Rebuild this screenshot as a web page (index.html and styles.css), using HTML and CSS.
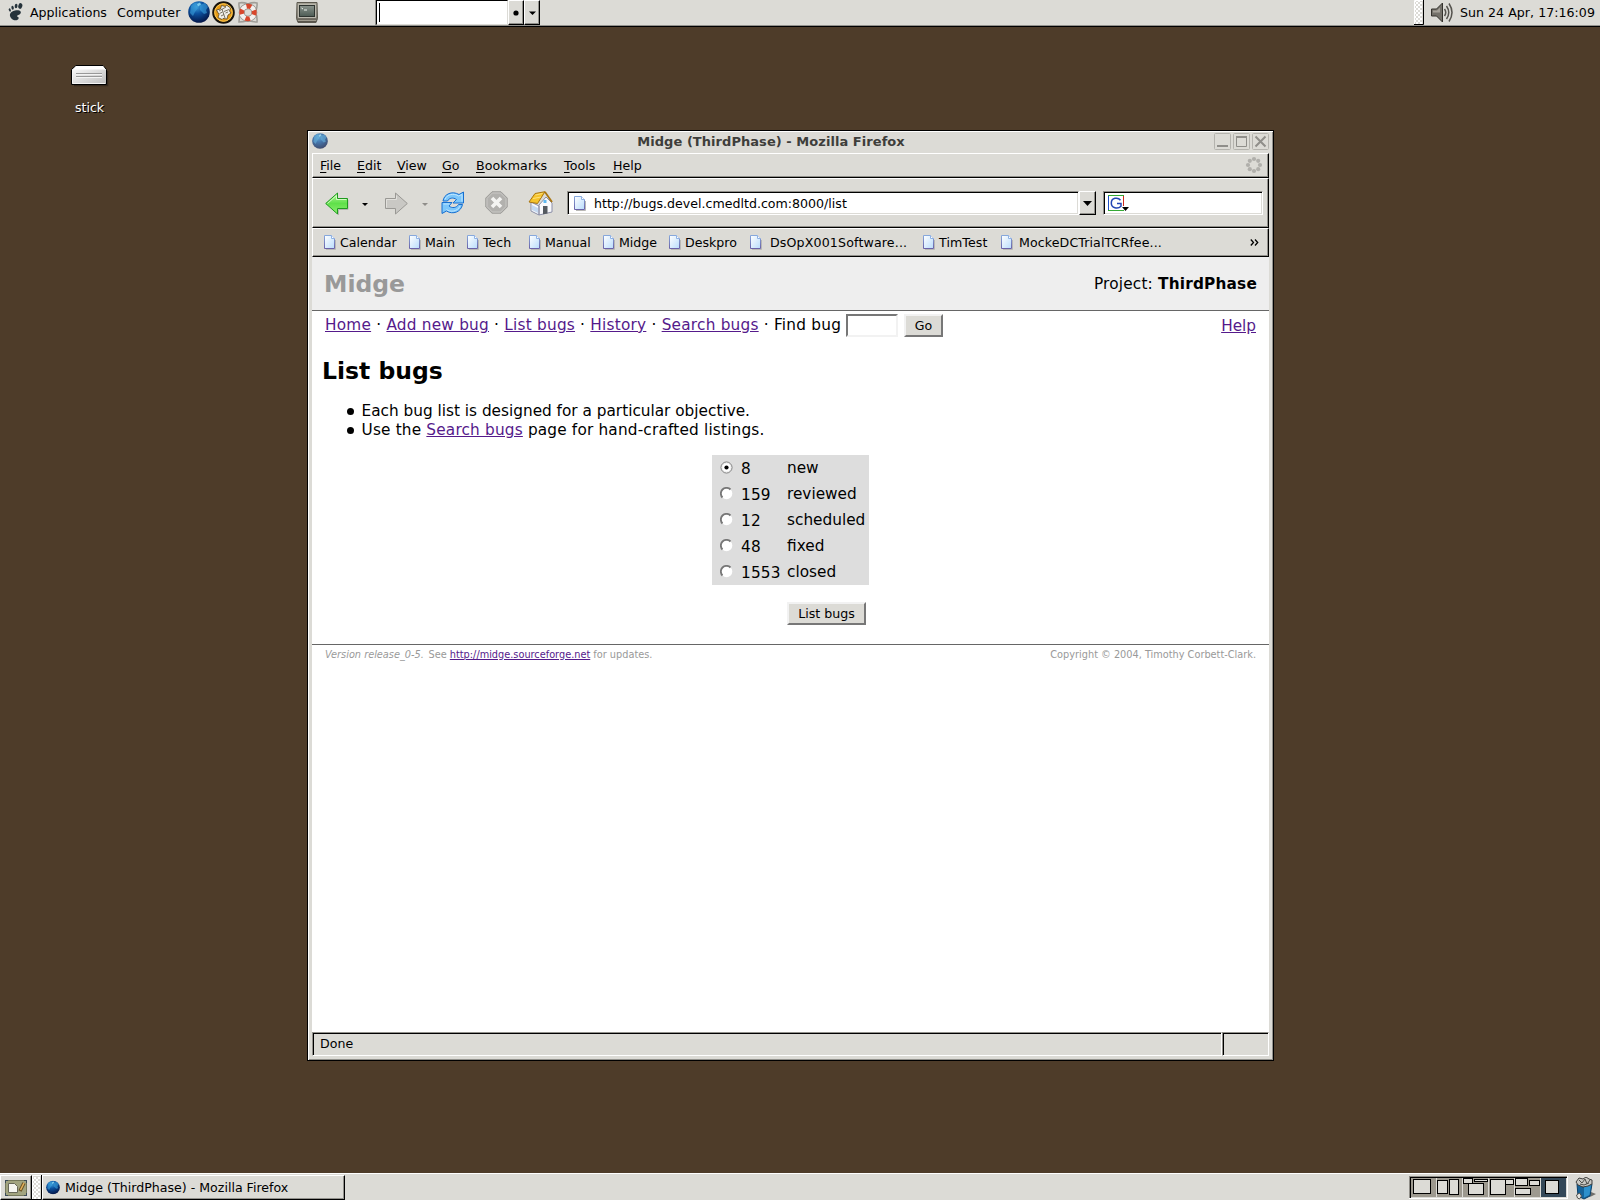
FILE: index.html
```html
<!DOCTYPE html>
<html lang="en">
<head>
<meta charset="utf-8">
<title>Midge (ThirdPhase) - Mozilla Firefox</title>
<link rel="stylesheet" href="styles.css">
</head>
<body>
<svg class="defs" width="0" height="0" aria-hidden="true">
  <defs>
    <radialGradient id="globeFill" cx=".4" cy=".25" r=".8"><stop offset="0" stop-color="#3fa0dc"/><stop offset=".4" stop-color="#0c52a0"/><stop offset="1" stop-color="#03103f"/></radialGradient>
    <linearGradient id="pageFill" x1="0" y1="0" x2="1" y2="1"><stop offset="0" stop-color="#fff"/><stop offset="1" stop-color="#b9dcfc"/></linearGradient>
    <linearGradient id="pageEdge" x1="0" y1="0" x2="0" y2="1"><stop offset="0" stop-color="#86a8dc"/><stop offset="1" stop-color="#6a62a8"/></linearGradient>
    <linearGradient id="greenFill" x1="0" y1="0" x2="0" y2="1"><stop offset="0" stop-color="#b4f79a"/><stop offset=".5" stop-color="#5fe04a"/><stop offset="1" stop-color="#8df070"/></linearGradient>
    <linearGradient id="driveFill" x1="0" y1="0" x2="1" y2="1"><stop offset="0" stop-color="#fff"/><stop offset="1" stop-color="#bdbdbd"/></linearGradient>
    <linearGradient id="metal" x1="0" y1="0" x2="0" y2="1"><stop offset="0" stop-color="#a5a296"/><stop offset=".7" stop-color="#87837a"/><stop offset="1" stop-color="#504c42"/></linearGradient>
    <linearGradient id="screen" x1="0" y1="0" x2="0" y2="1"><stop offset="0" stop-color="#8a938c"/><stop offset="1" stop-color="#4c5b54"/></linearGradient>
    <pattern id="dots" width="4" height="4" patternUnits="userSpaceOnUse"><rect width="2" height="2" fill="#fff"/><rect x="2" y="2" width="2" height="2" fill="#fff"/></pattern>
    <symbol id="page" viewBox="0 0 12 15">
      <path d="M2 14.500h9.500V5" fill="none" stroke="#b9b8b5"/>
      <path d="M.5.5h7l3 3v10H.5z" fill="url(#pageFill)" stroke="url(#pageEdge)"/>
      <path d="M7.500.5v3h3" fill="#fff" stroke="#8fb2e4"/>
    </symbol>
    <symbol id="globe" viewBox="0 0 22 22">
      <circle cx="11" cy="11" r="10.800" fill="url(#globeFill)"/>
      <path d="M3 5q3-4 6-3l-1 3 2 2-3 4-2 4-3-3zM12 4l5-2 3 4-2 3 1 3-3 1-4-4z" fill="#3aa0dc" opacity=".6"/>
      <path d="M9 3l3-1.500 1 2-3 2z" fill="#8fdcf6" opacity=".8"/>
    </symbol>
    <symbol id="radio" viewBox="0 0 13 13">
      <circle cx="6.500" cy="6.500" r="5.800" fill="#fff"/>
      <path d="M2.500 10.500A5.500 5.500 0 0 1 10.500 2.500" fill="none" stroke="#777" stroke-width="1.800"/>
    </symbol>
  </defs>
</svg>

<div class="desktop">
  <header class="panel panel-top">
    <svg class="foot" width="15" height="18" viewBox="0 0 15 18"><g fill="#26333b"><path d="M7 7.500c4-1 7 .5 5.500 3-1 1.500-3.500 1.500-3.500 2.500s2 .5 1.600 2.500C10 18 5 18 3 15 .8 12 2 8.500 7 7.500z"/><ellipse cx="12.300" cy="3" rx="2" ry="2.900" transform="rotate(15 12.300 3)"/><ellipse cx="8.100" cy="3" rx="1.400" ry="2.300" transform="rotate(8 8.100 3)"/><ellipse cx="4.600" cy="4.700" rx="1.200" ry="2" transform="rotate(-10 4.600 4.700)"/><ellipse cx="1.800" cy="7" rx="1" ry="1.700" transform="rotate(-22 1.800 7)"/></g></svg>
    <span class="panel-apps">Applications</span>
    <span class="panel-computer">Computer</span>
    <svg class="launch-globe" width="22" height="22"><use href="#globe"/></svg>
    <svg class="launch-mail" width="23" height="23" viewBox="0 0 23 23"><circle cx="11.500" cy="11.500" r="10.300" fill="#e79a12" stroke="#17130c" stroke-width="2"/><circle cx="11.500" cy="11.500" r="8.800" fill="none" stroke="#f9c95a"/><path d="M4.500 9l4-1 1-3.500 4 1 1-1.500 4 3-1 3 1.500 2-3 2-1 4-4-.5-1 1-4-2 1-3z" fill="#efeee8" stroke="#54462a" stroke-width=".8"/><path d="M7 10l7-4M7.500 12.500l3-1.500M12 10.500l5-2M9 15l3-1.500M13.500 12l2.500-1M10 8l3 9" stroke="#6d6656" stroke-width=".9"/></svg>
    <svg class="launch-help" width="22" height="23" viewBox="0 0 22 23"><path d="M2 2q4-1 9 1 5-2 9-1 .5 4-1.500 9 2 5 1.500 10-4 0-9-1.500Q6 21 2 21q0-5 1.500-10Q1.500 6 2 2z" fill="none" stroke="#a09e98" stroke-width="1.600"/><circle cx="11" cy="11.500" r="6.300" fill="none" stroke="#8d8983" stroke-width="6"/><circle cx="11" cy="11.500" r="6.300" fill="none" stroke="#f3f1ef" stroke-width="4.600"/><circle cx="11" cy="11.500" r="6.300" fill="none" stroke="#d8472c" stroke-width="4.800" stroke-dasharray="4.500 5.396" transform="rotate(-20 11 11.500)"/></svg>
    <svg class="launch-term" width="22" height="22" viewBox="0 0 22 22"><path d="M1 .5h20l.5 16-1.500 4H2l-1.500-4z" fill="url(#metal)" stroke="#5c594f"/><rect x="2.500" y="2.500" width="17" height="13" fill="#5d6059" stroke="#bab8ad"/><rect x="3.500" y="3.500" width="15" height="11" fill="url(#screen)" stroke="#2d332f"/><path d="M5.500 6l1.500 1M8 8h3" stroke="#eef3ee" fill="none"/><path d="M2 18.500h18" stroke="#a19d90"/></svg>
    <div class="runner"><i class="caret"></i></div>
    <div class="runner-btn"><svg width="6" height="6"><circle cx="3" cy="3" r="2.600"/></svg></div>
    <div class="runner-btn"><svg width="7" height="4"><path d="M0 .5h7L3.500 4z"/></svg></div>
    <svg class="grip-top" width="10" height="25"><rect width="10" height="25" fill="#dcdbd6"/><rect x="1" y="1" width="7" height="23" fill="url(#dots)"/><path d="M.5 25V.5H9" stroke="#fff" fill="none"/><path d="M9.500 0v24.500H0" stroke="#000" fill="none"/></svg>
    <svg class="speaker" width="22" height="21" viewBox="0 0 22 21"><path d="M.5 7h5L11.500 1v19l-6-6h-5z" fill="#74716a" stroke="#34322d"/><path d="M2 8.500h4l3-3v5H2z" fill="#bab7ae" opacity=".7"/><path d="M13.500 7q2.500 3.500 0 7M15.500 4q4.500 6.500 0 13M18 1.500q6 9 0 18" fill="none" stroke="#55534e" stroke-width="1.500"/></svg>
    <span class="clock">Sun 24 Apr, 17:16:09</span>
  </header>

  <div class="stick">
    <svg width="38" height="24" viewBox="0 0 38 24"><path d="M3 21.500h33.500V7" fill="none" stroke="#2b2118" stroke-width="1.500" opacity=".7"/><path d="M5 1.500h27l3.500 4v15H.5v-15z" fill="url(#driveFill)" stroke="#000"/><path d="M5 2h27l2.500 3.500h-32z" fill="#fff"/><path d="M1.500 19V6M2 19.500h32" stroke="#f5f5f5"/><path d="M5 9.500h26M5 12.500h26" stroke="#999"/><path d="M5 10.500h26M5 13.500h26" stroke="#f3f3f3"/></svg>
    <span>stick</span>
  </div>

  <main class="window">
    <div class="titlebar">
      <svg class="title-globe" width="16" height="16" viewBox="0 0 22 22" opacity=".72"><use href="#globe" width="22" height="22"/></svg>
      <h1 class="title">Midge (ThirdPhase) - Mozilla Firefox</h1>
      <div class="title-btns">
        <svg width="17" height="17"><rect x=".5" y=".5" width="16" height="16" rx="1" fill="none" stroke="#b4b3ae"/><path d="M3 13h11" stroke="#8f8e8a" stroke-width="2"/></svg>
        <svg width="17" height="17"><rect x=".5" y=".5" width="16" height="16" rx="1" fill="none" stroke="#b4b3ae"/><path d="M3.500 3v10.500h10V3" fill="none" stroke="#8f8e8a"/><path d="M3 4h11" stroke="#8f8e8a" stroke-width="2"/></svg>
        <svg width="17" height="17"><rect x=".5" y=".5" width="16" height="16" rx="1" fill="none" stroke="#b4b3ae"/><path d="M3.500 3.500l10 10M13.500 3.500l-10 10" stroke="#8f8e8a" stroke-width="2"/></svg>
      </div>
    </div>

    <nav class="bar menubar">
      <span class="m-file"><u>F</u>ile</span><span class="m-edit"><u>E</u>dit</span><span class="m-view"><u>V</u>iew</span><span class="m-go"><u>G</u>o</span><span class="m-book"><u>B</u>ookmarks</span><span class="m-tools"><u>T</u>ools</span><span class="m-help"><u>H</u>elp</span>
      <svg class="throbber" width="18" height="18"><g fill="#b0afab"><circle cx="9" cy="3" r="2.100"/><circle cx="13.200" cy="4.800" r="2.100"/><circle cx="15" cy="9" r="2.100"/><circle cx="13.200" cy="13.200" r="2.100"/><circle cx="9" cy="15" r="2.100"/><circle cx="4.800" cy="13.200" r="2.100"/><circle cx="3" cy="9" r="2.100"/><circle cx="4.800" cy="4.800" r="2.100"/></g></svg>
    </nav>

    <div class="bar toolbar">
      <svg class="t-back" width="24" height="24" viewBox="0 0 24 24"><path d="M13.500 23v-5.500h9.500V8" stroke="#b3b2ae" fill="none"/><path d="M.7 11.500L12.500 1v5.500h10v10h-10V22z" fill="url(#greenFill)" stroke="#1f9a1f" stroke-linejoin="round"/><path d="M2.500 11.500l9-8v4h10" fill="none" stroke="#d2fbc2"/></svg>
      <svg class="t-caret" width="6" height="3"><path d="M0 0h6L3 3z"/></svg>
      <svg class="t-fwd" width="24" height="24" viewBox="0 0 24 24"><path d="M22.300 11.500L10.500 1v5.500H.5v10h10V22z" fill="#c9c8c4" stroke="#999894" stroke-linejoin="round"/><path d="M1.500 15.500v-8h10v-4" fill="none" stroke="#e1e0dc"/></svg>
      <svg class="t-caret" width="6" height="3"><path d="M0 0h6L3 3z" fill="#8f8e8a"/></svg>
      <svg class="t-reload" width="24" height="24" viewBox="0 0 24 24"><g fill="#7cc7fb" stroke="#176fd0" stroke-linejoin="round"><path d="M2 10C3 3 11-.5 18 3.500L22.500 1v11H12l3.500-3.500C12 6 8 7 6.500 10z"/><path d="M21.500 13.500C20 21 12 24 5.500 20L1 22.500v-11h10L8 15c3 2.500 7.500 2 9.500-1.500z"/></g><path d="M4 8.500C6 3 13 2 17.500 5l3.500-1.500v7" fill="none" stroke="#c0e6ff"/><path d="M2.500 13h6M19 15C17 20.500 9 21.500 5.500 18.500" fill="none" stroke="#c0e6ff"/></svg>
      <svg class="t-stop" width="24" height="24" viewBox="0 0 24 24"><path d="M7 .8h9l6.200 6.200v9L16 22.200H7L.8 16V7z" fill="#b2b1ae" stroke="#9b9a97"/><path d="M7.400 2h8.200L21 7.500v8L15.600 21H7.400L2 15.500v-8z" fill="none" stroke="#c9c8c5"/><path d="M7 7l9 9M16 7l-9 9" stroke="#f4f4f2" stroke-width="3.600"/></svg>
      <svg class="t-home" width="25" height="25" viewBox="0 0 25 25"><path d="M3 11l8 4v9l-8-4zM11 14l7-8 6 6v9l-13 3z" fill="#f8f8fb" stroke="#8b8fa8"/><path d="M4 14l6 3v5l-6-3z" fill="#c4d8f0"/><path d="M15 15h4.500v7.500l-4.500.8z" fill="#555a60"/><rect x="15.500" y="9" width="3" height="3" fill="#60b8ef"/><path d="M1 11L7 2.500 17 .7 9.500 12.500z" fill="#f5c32c" stroke="#a97510" stroke-linejoin="round"/><path d="M17 1l7 10" stroke="#a97510" stroke-width="1.800"/><path d="M7.500 4l7-1.500M5 7.500l8-1.500" stroke="#ffe27c"/></svg>
      <div class="url"><svg width="12" height="15"><use href="#page"/></svg><span>http://bugs.devel.cmedltd.com:8000/list</span></div>
      <div class="url-drop"><svg width="9" height="5"><path d="M0 0h9L4.500 5z"/></svg></div>
      <div class="search">
        <svg width="22" height="17" viewBox="0 0 22 17"><path d="M.5 16V.5" stroke="#1e50c8"/><path d="M0 .5h16M0 15.500h16" stroke="#35a935"/><path d="M15.500 1v10" stroke="#d12a1c"/><path d="M12.500 5.300C10 1.800 3.300 2.700 3.300 8s6.500 6.500 9.700 3.300V8.500H9" fill="none" stroke="#2345b4" stroke-width="1.500"/><path d="M14 12h7l-3.500 4z"/></svg>
      </div>
    </div>

    <div class="bar bookmarks">
      <span class="bm b1"><svg width="12" height="15"><use href="#page"/></svg>Calendar</span>
      <span class="bm b2"><svg width="12" height="15"><use href="#page"/></svg>Main</span>
      <span class="bm b3"><svg width="12" height="15"><use href="#page"/></svg>Tech</span>
      <span class="bm b4"><svg width="12" height="15"><use href="#page"/></svg>Manual</span>
      <span class="bm b5"><svg width="12" height="15"><use href="#page"/></svg>Midge</span>
      <span class="bm b6"><svg width="12" height="15"><use href="#page"/></svg>Deskpro</span>
      <span class="bm b7"><svg width="12" height="15"><use href="#page"/></svg>DsOpX001Software...</span>
      <span class="bm b8"><svg width="12" height="15"><use href="#page"/></svg>TimTest</span>
      <span class="bm b9"><svg width="12" height="15"><use href="#page"/></svg>MockeDCTrialTCRfee...</span>
      <svg class="more" width="9" height="7"><path d="M.8.500L3.500 3.500.8 6.500M5 .5l2.700 3L5 6.500" fill="none" stroke="#000" stroke-width="1.300"/></svg>
    </div>

    <section class="doc">
      <div class="banner"><span class="brand">Midge</span><span class="project">Project: <b>ThirdPhase</b></span></div>
      <div class="nav">
        <div class="links"><a>Home</a> · <a>Add new bug</a> · <a>List bugs</a> · <a>History</a> · <a>Search bugs</a> · Find bug</div>
        <div class="find"></div>
        <div class="button go">Go</div>
        <a class="help">Help</a>
      </div>
      <h2>List bugs</h2>
      <ul>
        <li>Each bug list is designed for a particular objective.</li>
        <li class="loose">Use the <a>Search bugs</a> page for hand-crafted listings.</li>
      </ul>
      <div class="choices">
        <div class="row"><svg width="13" height="13"><circle cx="6.500" cy="6.500" r="5.500" fill="#fff" stroke="#777"/><circle cx="6.500" cy="6.500" r="4.500" fill="none" stroke="#ddd" stroke-width=".6"/><circle cx="6.500" cy="6.500" r="2.100"/></svg><span class="num">8</span><span>new</span></div>
        <div class="row"><svg width="13" height="13"><use href="#radio"/></svg><span class="num">159</span><span>reviewed</span></div>
        <div class="row"><svg width="13" height="13"><use href="#radio"/></svg><span class="num">12</span><span>scheduled</span></div>
        <div class="row"><svg width="13" height="13"><use href="#radio"/></svg><span class="num">48</span><span>fixed</span></div>
        <div class="row"><svg width="13" height="13"><use href="#radio"/></svg><span class="num">1553</span><span>closed</span></div>
      </div>
      <div class="button submit">List bugs</div>
      <footer><span><i>Version release_0-5.</i> &nbsp;See <a>http://midge.sourceforge.net</a> for updates.</span><span class="copy">Copyright © 2004, Timothy Corbett-Clark.</span></footer>
    </section>

    <div class="status"><div class="status-text">Done</div><div class="status-end"></div></div>
  </main>

  <footer class="panel panel-bottom">
    <div class="raised show-desk"><svg width="22" height="16" viewBox="0 0 22 16"><rect x=".5" y=".5" width="21" height="15" fill="#a2a47f" stroke="#74775a"/><path d="M0 3V0h3M19 0h3v3M22 13v3h-3M3 16H0v-3" fill="none" stroke="#3b4b58" stroke-width="2"/><path d="M3.500 3.500h6l3 3v6h-9z" fill="#f5f5f0" stroke="#686858"/><path d="M19 3l-4 8" stroke="#6c5326" stroke-width="3.500"/><path d="M19 3l-3.500 7" stroke="#e4b25c" stroke-width="1.500"/></svg></div>
    <svg class="grip-bottom" width="10" height="25"><rect x="1" y="2" width="7" height="22" fill="url(#dots)"/><path d="M.5 25V.5H9" stroke="#fff" fill="none"/><path d="M9.500 0v24.500H0" stroke="#000" fill="none"/></svg>
    <div class="raised task"><svg width="14" height="15" viewBox="0 0 22 22"><use href="#globe" width="22" height="22"/></svg><span>Midge (ThirdPhase) - Mozilla Firefox</span></div>
    <svg class="pager" width="159" height="23" shape-rendering="crispEdges">
      <rect width="159" height="23" fill="#fff"/><path d="M0 0h158v1H1v21H0z" fill="#8e8c86"/><path d="M1 1h157v1H2v20H1z"/>
      <rect x="2" y="2" width="156" height="20" fill="#dcdbd6"/>
      <g fill="#9d998f"><rect x="2" y="2" width="25" height="19"/><rect x="28" y="2" width="25" height="19"/><rect x="54" y="2" width="25" height="19"/><rect x="80" y="2" width="25" height="19"/><rect x="106" y="2" width="25" height="19"/></g>
      <rect x="132" y="2" width="25" height="19" fill="#344858"/>
      <g fill="#dcdbd6" stroke="#000"><rect x="4.500" y="3.500" width="17" height="14"/><rect x="28.500" y="4.500" width="10" height="13"/><rect x="40.500" y="3.500" width="9" height="15"/><rect x="54.500" y="2.500" width="9" height="5"/><rect x="65.500" y="3.500" width="13" height="2"/><rect x="59.500" y="7.500" width="15" height="11"/><rect x="96.500" y="3.500" width="8" height="5"/><rect x="81.500" y="3.500" width="15" height="15"/><rect x="106.500" y="2.500" width="12" height="7"/><rect x="120.500" y="4.500" width="10" height="5"/><rect x="106.500" y="12.500" width="15" height="6"/><rect x="136.500" y="4.500" width="13" height="13"/></g>
    </svg>
    <svg class="trash" width="22" height="23" viewBox="0 0 22 23"><path d="M15 20l6-3-5-2z" fill="#6f6e6a"/><path d="M2 7l6 3 9-3-2 12-6 3-6-3z" fill="#15639a" stroke="#0c3f66"/><path d="M9 10v10.500l5.500-2.500L16 8z" fill="#2c90cc"/><path d="M1 5l3-4 4 1 3-2 3 2 3 1v4l-4 2-5 1-5-2z" fill="#c9c9c4" stroke="#3f3f3c"/><path d="M4 3l3 3 3-4 2 5 3-4M5 7l4 1 5-2" stroke="#4e4e4a" fill="none"/><path d="M1.500 18l3-2 2 3-2 3-2-1z" fill="#e4e4e0" stroke="#52524e"/></svg>
  </footer>
</div>
</body>
</html>
```

FILE: styles.css
```css
* { box-sizing: border-box; }
body { margin: 0; font-family: "DejaVu Sans", sans-serif; font-size: 12.600px; color: #000; }
svg { display: block; flex: none; }
.defs { position: absolute; }
a { color: #551a8b; text-decoration: underline; }

.desktop { position: relative; display: flex; flex-direction: column; justify-content: space-between; width: 1600px; height: 1200px; overflow: hidden; background: #4e3c29; }

/* Panels */
.panel { display: flex; align-items: flex-start; background: #dcdbd6; white-space: nowrap; }
.panel-top { height: 27px; border-bottom: 1px solid #000; box-shadow: inset 0 -1px #92918c; line-height: 25px; }
.foot { margin: 3px 0 0 8px; }
.panel-apps { width: 87px; margin-left: 7px; }
.panel-computer { width: 71px; letter-spacing: .1px; }
.launch-globe { margin-top: 1px; }
.launch-mail { margin: 1px 0 0 2px; }
.launch-help { margin: 1px 0 0 2px; }
.launch-term { margin: 2px 0 0 37px; }
.runner { width: 132px; height: 25px; margin-left: 58px; background: #fff; border: 1px solid #000; border-color: #000 #dcdbd6 #dcdbd6 #000; padding: 2px 0 0 2px; box-shadow: -1px 0 #92918c; }
.caret { display: block; width: 1px; height: 19px; background: #000; }
.runner-btn { display: flex; align-items: center; justify-content: center; width: 16px; height: 25px; border: 1px solid #000; border-color: #fff #000 #000 #fff; box-shadow: inset -1px -1px #92918c; }
.grip-top { margin-left: auto; }
.speaker { margin: 2px 0 0 7px; }
.clock { width: 140px; margin-left: 7px; letter-spacing: .03px; }

.stick { position: absolute; left: 58px; top: 64px; width: 63px; display: flex; flex-direction: column; align-items: center; gap: 11px; color: #fff; line-height: 18px; text-shadow: 1px 1px #000; }

/* Browser window */
.window { position: absolute; left: 307px; top: 130px; width: 967px; height: 931px; display: flex; flex-direction: column; padding: 1px 4px 4px; background: #dcdbd6; border: 1px solid #000; box-shadow: inset 1px 1px #fff, inset -1px -1px #92918c; }
.titlebar { display: flex; height: 21px; padding: 1px 0 0; }
.title { flex: 1; margin: 0; color: #3e3e3b; font-size: 13px; line-height: 17px; text-align: center; letter-spacing: .05px; }
.title-btns { display: flex; gap: 2px; }
.bar { display: flex; border: 1px solid #000; border-color: #fff #000 #000 #fff; box-shadow: inset -1px -1px #92918c; }
.menubar { height: 25px; padding: 1px 4px 0 7px; line-height: 22px; }
.m-file { width: 37px; }
.m-edit { width: 40px; }
.m-view { width: 45px; }
.m-go { width: 34px; }
.m-book { width: 88px; letter-spacing: .1px; }
.m-tools { width: 49px; letter-spacing: .1px; }
.menubar u { text-underline-offset: 2px; }
.throbber { margin: 1px 1px 0 auto; }
.toolbar { height: 50px; padding: 12px 4px 0 12px; }
.t-back { margin: 1px 0 0; }
.t-caret { margin: 12px 0 0 13px; }
.t-fwd { margin: 1px 0 0 17px; }
.t-reload { margin: 0 0 0 13px; }
.t-stop { margin: 0 0 0 20px; }
.t-home { margin: 0 0 0 19px; }
.url, .search { display: flex; align-items: center; height: 24px; background: #fff; border: 1px solid #92918c; border-color: #92918c #fff #fff #92918c; box-shadow: inset 1px 1px #000, inset -1px -1px #dcdbd6; }
.url { width: 512px; margin-left: 14px; padding-left: 6px; gap: 8px; }
.url span { line-height: 24px; padding-top: 1px; }
.url-drop { display: flex; align-items: center; justify-content: center; width: 17px; height: 24px; border: 1px solid #000; border-color: #fff #000 #000 #fff; box-shadow: inset -1px -1px #92918c; }
.search { width: 160px; margin-left: 7px; padding-left: 4px; }
.bookmarks { height: 29px; padding: 0 9px 0 11px; line-height: 28px; white-space: nowrap; }
.bm { display: flex; gap: 4px; flex: none; }
.bm svg { margin-top: 6px; }
.b1 { width: 85px; }
.b2 { width: 58px; }
.b3 { width: 62px; }
.b4 { width: 74px; }
.b5 { width: 66px; }
.b6 { width: 81px; }
.b7 { width: 173px; gap: 8px; letter-spacing: .15px; }
.b8 { width: 78px; letter-spacing: .1px; }
.b9 { gap: 6px; letter-spacing: .1px; }
.more { margin: 10px 0 0 auto; }

/* Page */
.doc { flex: 1; min-height: 0; width: 957px; background: #fff; font-size: 15.300px; line-height: 19px; }
.banner { display: flex; justify-content: space-between; height: 54px; padding: 0 12px; background: #eee; border-bottom: 1px solid #666; line-height: 55px; }
.brand { color: #999; font-size: 23.500px; font-weight: bold; }
.project { letter-spacing: .2px; }
.nav { display: flex; height: 42px; padding: 0 13px; white-space: nowrap; }
.links { width: 521px; padding-top: 5px; letter-spacing: .23px; }
.find { width: 52px; height: 23px; margin-top: 3px; border: 2px solid #777; border-color: #777 #f2f2f2 #f2f2f2 #777; }
.button { display: flex; align-items: center; justify-content: center; height: 23px; background: #dcdbd6; border: 2px solid #777; border-color: #f2f2f2 #777 #777 #f2f2f2; font-size: 12.600px; line-height: 18px; }
.go { width: 39px; margin: 3px 0 0 6px; }
.help { margin: 6px 0 0 auto; }
h2 { margin: 0 0 0 10px; font-size: 23.500px; line-height: 36px; }
ul { margin: 13px 0 0; padding: 0 0 0 49.500px; list-style: none; }
li { position: relative; }
li::before { content: ""; position: absolute; left: -14.500px; top: 6px; width: 7px; height: 7px; border-radius: 50%; background: #000; }
.loose { letter-spacing: .18px; }
.choices { width: 157px; height: 130px; margin: 15px 0 0 400px; background: #ddd; line-height: 27px; }
.row { display: flex; align-items: flex-start; height: 26px; padding-left: 8px; }
.row svg { margin-top: 6px; }
.num { width: 46px; margin-left: 8px; padding-top: 1px; letter-spacing: .2px; }
.submit { width: 79px; margin: 17px 0 0 475px; }
footer { white-space: nowrap; }
.doc footer { display: flex; justify-content: space-between; margin-top: 19px; padding: 0 13px; border-top: 1px solid #666; color: #999; font-size: 9.760px; line-height: 20px; }
.doc footer i { margin-right: -1.500px; }

.status { display: flex; height: 24px; }
.status-text, .status-end { border: 1px solid #92918c; border-color: #92918c #fff #fff #92918c; box-shadow: inset 1px 1px #000; line-height: 21px; }
.status-text { width: 910px; padding: 0 0 0 7px; }
.status-end { flex: 1; }

.panel-bottom { height: 27px; border-top: 1px solid #fff; padding-top: 1px; line-height: 24px; }
.raised { display: flex; height: 25px; border: 1px solid #000; border-color: #fff #000 #000 #fff; box-shadow: inset -1px -1px #92918c; }
.show-desk { width: 32px; padding: 4px 0 0 4px; }
.task { width: 303px; padding-left: 3px; }
.task svg { margin-top: 4px; }
.task span { margin-left: 5px; }
.pager { margin: 1px 0 0 auto; }
.trash { margin: 2px 3px 0 7px; }
```
